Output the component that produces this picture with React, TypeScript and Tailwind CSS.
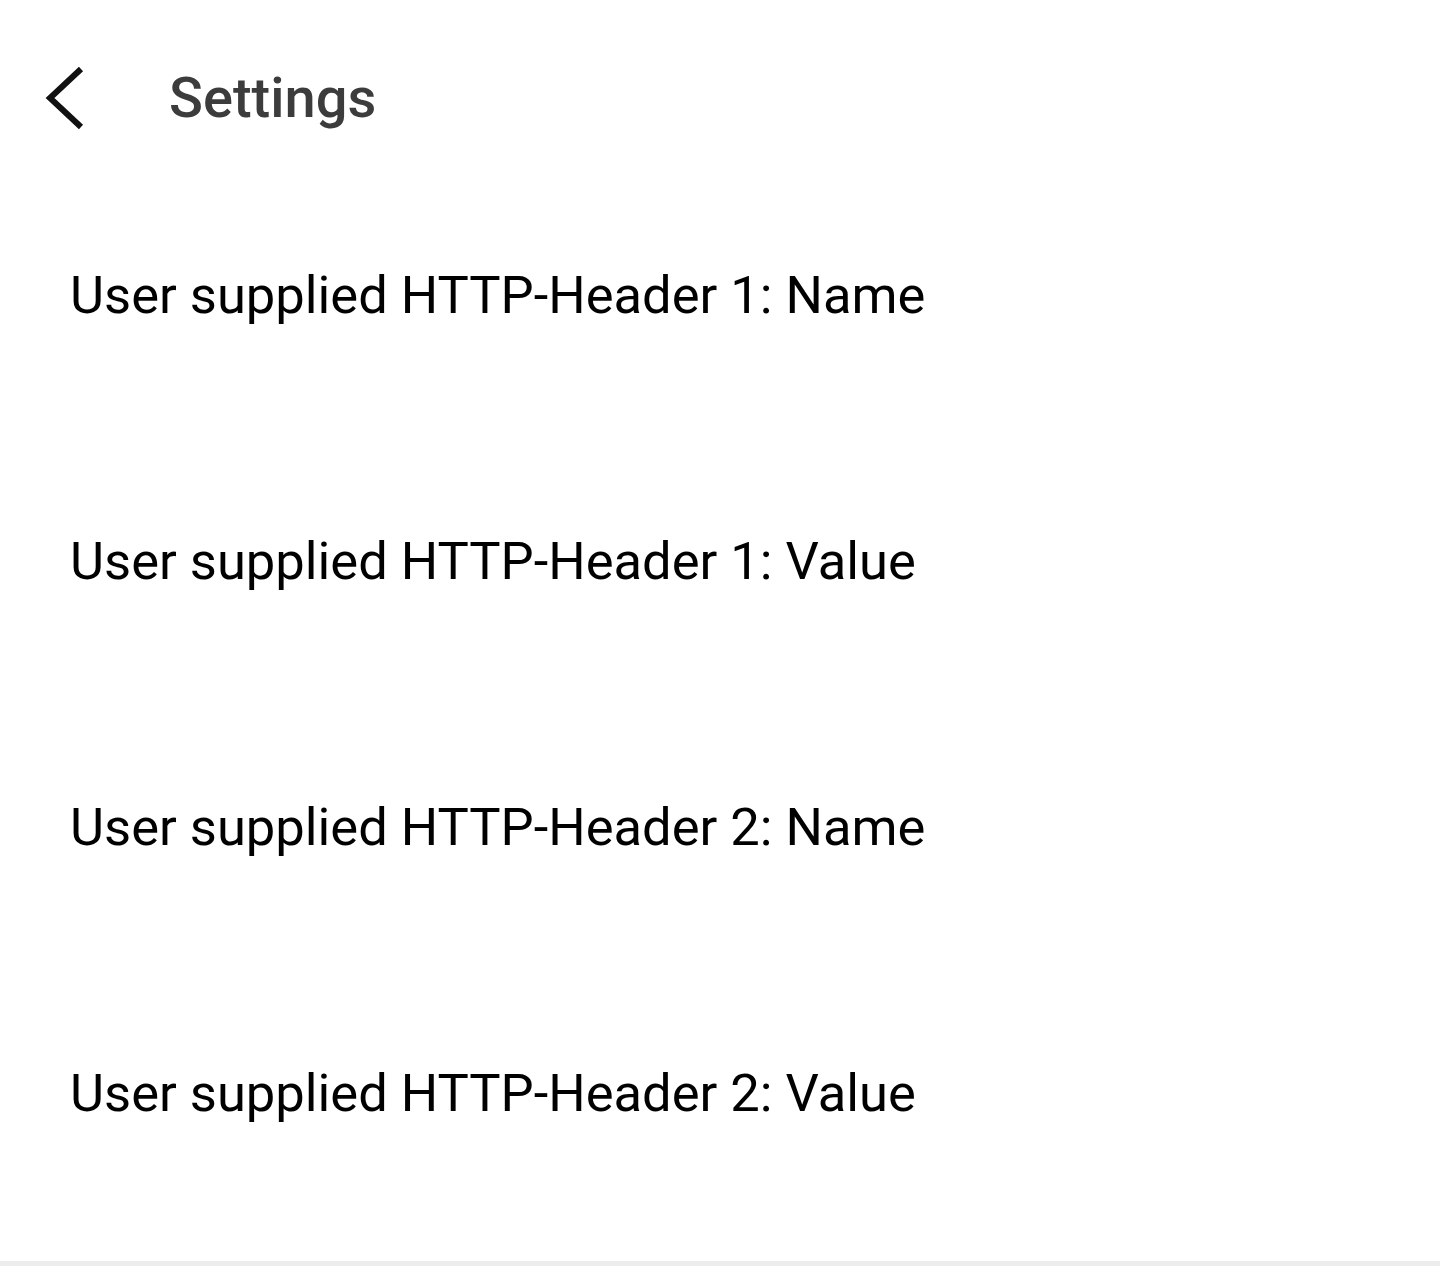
import React from "react";

const rows = [
  "User supplied HTTP-Header 1: Name",
  "User supplied HTTP-Header 1: Value",
  "User supplied HTTP-Header 2: Name",
  "User supplied HTTP-Header 2: Value",
];

function BackIcon() {
  return (
    <svg width="40" height="64" viewBox="0 0 40 64" fill="none">
      <polyline
        points="36,3 5,32 36,61"
        stroke="#111111"
        strokeWidth="6"
        strokeLinejoin="miter"
      />
    </svg>
  );
}

export default function App() {
  return (
    <div className="flex min-h-[1266px] w-full flex-col bg-white font-['Roboto',sans-serif]">
      <header className="mt-[58px] flex h-[80px] items-center">
        <button className="ml-[45px] flex items-center">
          <BackIcon />
        </button>
        <h1 className="ml-[84px] text-[56px] font-medium leading-none text-[#3c3c3c]">
          Settings
        </h1>
      </header>
      <ul className="mt-[24px] flex flex-col">
        {rows.map((label) => (
          <li
            key={label}
            className="flex h-[266px] items-center px-[70px] text-[52.5px] text-black"
          >
            {label}
          </li>
        ))}
      </ul>
      <div className="flex-1" />
      <div className="h-[5px] w-full bg-[#ececec]" />
    </div>
  );
}
